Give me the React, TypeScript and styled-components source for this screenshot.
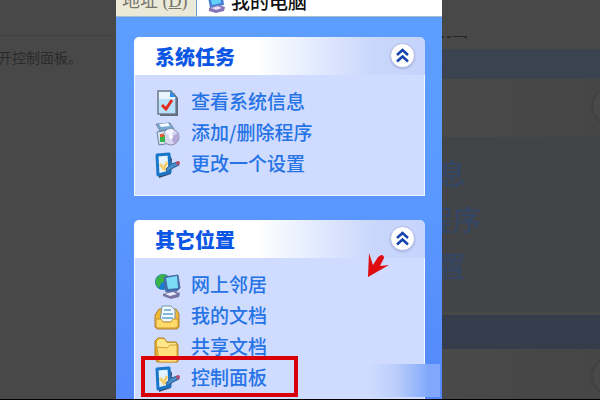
import React from "react";
import styled, { createGlobalStyle } from "styled-components";

const GlobalStyle = createGlobalStyle`
  * { box-sizing: border-box; }
  body {
    margin: 0;
    background: #000;
    font-family: "Noto Sans CJK SC", sans-serif;
  }
`;

const Page = styled.div`
  display: grid;
  grid-template-columns: 116fr 326fr 158fr;
  height: 100vh;
  padding-bottom: 1px;
  overflow: hidden;
`;

const Article = styled.aside`
  background: #484848;
  overflow: hidden;
`;

const ArticleTop = styled.div`
  height: 36px;
  border-bottom: 1px solid #414141;
`;

const Caption = styled.p`
  margin: 10px 0 0 -2px;
  font-size: 14px;
  line-height: 22px;
  color: #2b2b2b;
  white-space: nowrap;
`;

const Explorer = styled.main`
  position: relative;
  overflow: hidden;
  background: linear-gradient(#5d9fff, #5a98ff 50%, #5488fb);
`;

const AddressBar = styled.div`
  display: flex;
  align-items: center;
  height: 32px;
  margin-top: -15px;
  background: #ebe9d8;
  border-bottom: 1px solid #a9bcd0;
`;

const AddressLabel = styled.label`
  flex: none;
  width: 80px;
  padding-left: 6px;
  font: 18px/28px "Liberation Serif", "Noto Sans CJK SC", serif;
  color: #77756b;
  white-space: nowrap;
`;

const AddressField = styled.div`
  flex: 1;
  min-width: 0;
  display: flex;
  align-items: center;
  gap: 5px;
  height: 100%;
  padding-left: 8px;
  background: #fff;
  border-left: 1px solid #6c9bd0;
`;

const AddressInput = styled.input`
  flex: 1;
  min-width: 0;
  padding: 0;
  border: 0;
  outline: 0;
  background: transparent;
  font: 500 19px/28px "Noto Sans CJK SC", sans-serif;
  color: #111;
`;

const Panels = styled.div`
  display: flex;
  flex-direction: column;
  gap: 24px;
  padding: 20px 17px 0 18px;
`;

const Panel = styled.section`
  overflow: hidden;
  border-radius: 5px 5px 0 0;
`;

const PanelHeader = styled.header`
  display: flex;
  align-items: center;
  justify-content: space-between;
  height: 38px;
  padding: 0 10px 2px 21px;
  background: linear-gradient(90deg, #fff 42%, #e6edff 60%, #cad7fc 82%, #c6d3fb);
`;

const PanelTitle = styled.h2`
  margin: 0;
  padding-top: 3px;
  font-size: 20px;
  line-height: 28px;
  font-weight: 900;
  color: #0b56e4;
`;

const Collapse = styled.button`
  display: flex;
  align-items: center;
  justify-content: center;
  width: 25px;
  height: 25px;
  padding: 0;
  border: 1px solid #b4bce6;
  border-radius: 50%;
  background: #fff;
  box-shadow: 0 1px 2px #a3addd;
`;

const TaskList = styled.ul`
  margin: 0;
  padding: 10px 5px 17px;
  list-style: none;
  background: #cfdcff;
  border: 1px solid #f2f6ff;
  border-top: 0;
`;

const Task = styled.li<{ $marked?: boolean }>`
  display: flex;
  align-items: center;
  width: 157px;
  height: 31px;
  margin-left: 1px;
  padding-left: 13px;
  outline: ${(p) => (p.$marked ? "4px solid #d90009" : "none")};
  outline-offset: ${(p) => (p.$marked ? "1px" : "0")};
  ${(p) => p.$marked && "width: 147px; margin-left: 6px; padding-left: 8px;"}
`;

const TaskLink = styled.a`
  display: flex;
  align-items: center;
  gap: 10px;
  font-size: 19px;
  font-weight: 500;
  line-height: 28px;
  color: #2673e6;
  text-decoration: none;
  white-space: nowrap;

  svg {
    margin-top: 6px;
  }
`;

const Icon = styled.svg`
  flex: none;
  display: block;
  overflow: visible;
`;

const Pointer = styled.svg`
  position: absolute;
  right: 52px;
  top: 252px;
`;

const Watermark = styled.div`
  position: absolute;
  right: 2px;
  bottom: 2px;
  width: 70px;
  height: 33px;
  background: linear-gradient(90deg, #cfdcff00, #b9ccfb 40%, #7fa8fb 85%, #84a7ff);
`;

const Preview = styled.aside`
  overflow: hidden;
  background: #484848;
`;

const PreviewAddress = styled.div`
  display: flex;
  align-items: flex-end;
  height: 40px;
  padding-top: 36px;
`;

const PreviewAddressText = styled.span`
  display: flex;
  align-items: flex-end;
  justify-content: flex-end;
  width: 27px;
  height: 4px;
  overflow: hidden;
  font-size: 28px;
  line-height: 32px;
  color: #262626;
  white-space: nowrap;
`;

const PreviewBand = styled.div<{ $first?: boolean }>`
  height: ${(p) => (p.$first ? "30px" : "34px")};
  margin-top: ${(p) => (p.$first ? "9px" : "3px")};
  background: ${(p) => (p.$first ? "#3a434f" : "#353d4d")};
`;

const PreviewHeader = styled.div`
  display: flex;
  align-items: center;
  justify-content: flex-end;
  height: 58px;
  padding-bottom: 4px;
  background: linear-gradient(90deg, #494949, #464646);
`;

const PreviewRing = styled.div`
  flex: none;
  width: 38px;
  height: 38px;
  margin-right: -29px;
  border: 2px solid #404045;
  border-radius: 50%;
  background: #494949;
`;

const PreviewBody = styled.div`
  height: 175px;
  padding-top: 13px;
  background: #434447;
`;

const PreviewText = styled.div<{ $wide?: boolean }>`
  display: flex;
  justify-content: flex-end;
  width: ${(p) => (p.$wide ? "39px" : "24px")};
  overflow: hidden;
  font-size: 28px;
  font-weight: 500;
  line-height: 46px;
  color: #344564;
  white-space: nowrap;
`;

function ComputerIcon() {
  return (
    <Icon width="21" height="26" viewBox="0 0 21 26" aria-hidden="true">
      <path d="M2 4 17 2l2 15-14 3z" fill="#4a7fd1" />
      <path d="m5 6 10-2 1 11-9 2z" fill="#62d2fa" />
      <path d="m4 20 9-3 7 2-1 4-8 2-7-2z" fill="#8673b8" />
      <path d="m6 20 7-2 4 2-6 2z" fill="#e1dcf1" />
    </Icon>
  );
}

function ReportIcon() {
  return (
    <Icon width="27" height="27" viewBox="0 0 27 27" aria-hidden="true">
      <path d="M6 3h14l4 5v18H6z" fill="#626b7d" />
      <path d="M4 1h13l5 6v17H4z" fill="#e9f5ff" stroke="#68768c" strokeWidth="1.5" />
      <path d="M5 9h16v14H5z" fill="#b8e1fb" />
      <path d="M16 1v6h6z" fill="#2f8fe8" />
      <path d="m8 15 4 4 6-9" fill="none" stroke="#e42b1c" strokeWidth="3" />
    </Icon>
  );
}

function ProgramsIcon() {
  return (
    <Icon width="27" height="27" viewBox="0 0 27 27" aria-hidden="true">
      <path d="m2 3 14-1 4 6-14 2z" fill="#78a8cf" stroke="#7188a8" />
      <path d="m5 3 9-1 2 3-9 1z" fill="#f2f8ff" />
      <path d="m3 11 11-2 3 13-12 2z" fill="#d8e5ef" stroke="#6b809b" />
      <circle cx="17" cy="16" r="8" fill="#d8d5ef" stroke="#8b8eaa" />
      <path d="m17 16 7-4c2 4 0 9-4 11z" fill="#b3a7dc" />
      <path d="m17 16-6-5c2-3 6-4 9-2z" fill="#f4f3ff" />
      <circle cx="17" cy="16" r="2" fill="#fff" />
      <path d="M6 14h5v7H6z" fill="#38b34b" />
      <path d="M6 13h4v3H6z" fill="#e85c35" />
    </Icon>
  );
}

function SettingsIcon() {
  return (
    <Icon width="27" height="27" viewBox="0 0 27 27" aria-hidden="true">
      <path d="M4 4h12l2 3-1 15-12 4z" fill="#3a4a68" />
      <path d="m3 3 12-1 1 18-12 3z" fill="#e3f3ff" stroke="#1976c9" strokeWidth="3" strokeLinejoin="round" />
      <path d="m6 12 4 5 3-7" fill="none" stroke="#f3cf72" strokeWidth="3" />
      <path d="m12 17 5-5 7-2 1 3-6 3-6 4z" fill="#438dcc" stroke="#315b8b" />
      <circle cx="24" cy="11" r="2" fill="#b84b6b" />
    </Icon>
  );
}

function NetworkIcon() {
  return (
    <Icon width="27" height="27" viewBox="0 0 27 27" aria-hidden="true">
      <circle cx="9" cy="9" r="8" fill="#1c7ccd" />
      <path d="M2 6c3-5 8-6 12-3l-3 5-4 2-2 5C2 13 1 9 2 6z" fill="#3bb447" />
      <path d="m10 4 14-2 2 13-3 3-11 1z" fill="#4270ad" stroke="#5269a3" />
      <path d="m12 5 11-2 1 12-10 1z" fill="#7bdcf8" />
      <path d="m9 21 9-3 8 2-1 4-8 2-8-3z" fill="#7773a5" />
      <path d="m11 21 8-2 4 2-7 2z" fill="#ececfa" />
    </Icon>
  );
}

function DocumentsIcon() {
  return (
    <Icon width="27" height="27" viewBox="0 0 27 27" aria-hidden="true">
      <path d="M1 11 5 5h17l3 5v13l-2 2H3l-2-2z" fill="#eeb833" stroke="#ab8240" />
      <path d="M8 2h9l4 4v12H6z" fill="#f5faff" stroke="#6e91ae" />
      <path d="M10 6h7m-8 4h10M8 14h11" stroke="#82b8db" strokeWidth="2" />
      <path d="M2 15h5l2 3h8l2-3h5v7l-2 2H3l-1-2z" fill="#ffda68" stroke="#cb942a" />
    </Icon>
  );
}

function FolderIcon() {
  return (
    <Icon width="27" height="27" viewBox="0 0 27 27" aria-hidden="true">
      <path d="m1 6 3-3h6l3 4h9l2 3v17H3l-2-4z" fill="#e7aa27" stroke="#b28430" />
      <path d="m3 6 2-2h5l3 4h9v5H3z" fill="#ffe78a" />
      <path d="m3 12 10 1 3-3h7v17H5z" fill="#ffe07a" stroke="#d2a03b" />
    </Icon>
  );
}

const Chevrons = () => (
  <Icon width="13" height="15" viewBox="0 0 13 15" aria-hidden="true">
    <path d="m1 7 5.5-5L12 7M1 13.500l5.500-5 5.500 5" fill="none" stroke="#1743ae" strokeWidth="2.500" />
  </Icon>
);

type Entry = { name: string; icon: React.ReactNode; marked?: boolean };

const systemTasks: Entry[] = [
  { name: "查看系统信息", icon: <ReportIcon /> },
  { name: "添加/删除程序", icon: <ProgramsIcon /> },
  { name: "更改一个设置", icon: <SettingsIcon /> },
];

const otherPlaces: Entry[] = [
  { name: "网上邻居", icon: <NetworkIcon /> },
  { name: "我的文档", icon: <DocumentsIcon /> },
  { name: "共享文档", icon: <FolderIcon /> },
  { name: "控制面板", icon: <SettingsIcon />, marked: true },
];

function TaskPanel({ title, entries }: { title: string; entries: Entry[] }) {
  return (
    <Panel>
      <PanelHeader>
        <PanelTitle>{title}</PanelTitle>
        <Collapse type="button" aria-label={title}>
          <Chevrons />
        </Collapse>
      </PanelHeader>
      <TaskList>
        {entries.map((entry) => (
          <Task key={entry.name} $marked={entry.marked}>
            <TaskLink href="#">
              {entry.icon}
              {entry.name}
            </TaskLink>
          </Task>
        ))}
      </TaskList>
    </Panel>
  );
}

export default function App() {
  return (
    <>
      <GlobalStyle />
      <Page>
        <Article>
          <ArticleTop />
          <Caption>开控制面板。</Caption>
        </Article>
        <Explorer>
          <AddressBar>
            <AddressLabel htmlFor="address">
              地址 (<u>D</u>)
            </AddressLabel>
            <AddressField>
              <ComputerIcon />
              <AddressInput id="address" defaultValue="我的电脑" />
            </AddressField>
          </AddressBar>
          <Panels>
            <TaskPanel title="系统任务" entries={systemTasks} />
            <TaskPanel title="其它位置" entries={otherPlaces} />
          </Panels>
          <Pointer width="23" height="26" viewBox="0 0 23 26" aria-hidden="true">
            <path d="M2 1 1 25 22 13l-9 1 4-8q0-3-3-3l-3 2-5 8z" fill="#df0c12" />
          </Pointer>
          <Watermark />
        </Explorer>
        <Preview>
          <PreviewAddress>
            <PreviewAddressText>电脑</PreviewAddressText>
          </PreviewAddress>
          <PreviewBand $first />
          <PreviewHeader>
            <PreviewRing />
          </PreviewHeader>
          <PreviewBody>
            <PreviewText>息</PreviewText>
            <PreviewText $wide>程序</PreviewText>
            <PreviewText>置</PreviewText>
          </PreviewBody>
          <PreviewBand />
          <PreviewHeader>
            <PreviewRing />
          </PreviewHeader>
        </Preview>
      </Page>
    </>
  );
}
